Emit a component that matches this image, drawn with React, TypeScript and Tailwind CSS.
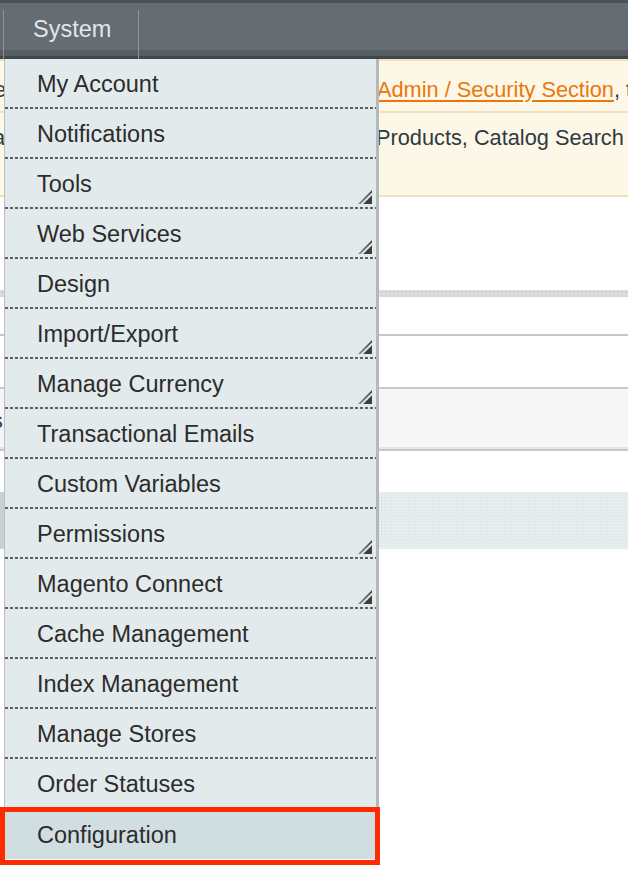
import React from "react";

type Item = { label: string; sub?: boolean; active?: boolean };

const items: Item[] = [
  { label: "My Account" },
  { label: "Notifications" },
  { label: "Tools", sub: true },
  { label: "Web Services", sub: true },
  { label: "Design" },
  { label: "Import/Export", sub: true },
  { label: "Manage Currency", sub: true },
  { label: "Transactional Emails" },
  { label: "Custom Variables" },
  { label: "Permissions", sub: true },
  { label: "Magento Connect", sub: true },
  { label: "Cache Management" },
  { label: "Index Management" },
  { label: "Manage Stores" },
  { label: "Order Statuses" },
  { label: "Configuration", active: true },
];

function SubArrow() {
  return (
    <svg
      width="14"
      height="14"
      viewBox="0 0 14 14"
      className="absolute right-[4px] bottom-[3px]"
    >
      <defs>
        <linearGradient id="ag" x1="0" y1="1" x2="1" y2="0">
          <stop offset="0" stopColor="#8a8a8a" />
          <stop offset="1" stopColor="#444" />
        </linearGradient>
      </defs>
      <polygon points="0,14 14,0 14,2.6 2.6,14" fill="url(#ag)" />
      <polygon points="5.2,14 14,5.2 14,14" fill="#3e3e3e" />
    </svg>
  );
}

export default function App() {
  return (
    <div className="relative w-[628px] h-[882px] overflow-hidden bg-white font-['Liberation_Sans',Arial,sans-serif]">
      {/* Top navigation bar */}
      <header className="flex h-[59px] flex-col border-t-[3px] border-[#4a5257]">
        <div className="flex h-[56px] bg-[linear-gradient(to_bottom,#656c72_0px,#656c72_47px,#575e63_47px,#575e63_53px,#3c464b_53px)]">
          <div className="ml-[3px] mt-[7px] flex w-[136px] items-start border-x border-[#8e9498] pl-[29px] pt-[5px] text-[23.5px] leading-[28px] text-[#e3e6e8]">
            System
          </div>
        </div>
      </header>

      {/* Page content underneath the dropdown */}
      <main className="flex flex-col">
        <div className="flex h-[138px] flex-col border-y-2 border-y-[#f1e1b8] bg-[#fdf7e7] text-[21.75px] leading-[25px] text-[#2f3a40]">
          <div className="flex h-[50px] items-center whitespace-nowrap pt-[6px]">
            <span className="ml-[-6px] w-[383px] shrink-0">e</span>
            <span className="shrink-0 text-[#eb770c] underline underline-offset-[3px]">
              Admin / Security Section
            </span>
            <span className="shrink-0">, to</span>
          </div>
          <div className="h-[2px] bg-[#efe0bb]" />
          <div className="flex whitespace-nowrap pt-[12px]">
            <span className="ml-[-7px] w-[383px] shrink-0">a</span>
            <span className="shrink-0">Products, Catalog Search Index</span>
          </div>
        </div>
        <div className="h-[93px]" />
        <div className="h-[7px] bg-[#dddddd] bg-[radial-gradient(circle,#cfcfcf_0.7px,transparent_0.9px)] bg-[length:4px_4px]" />
        <div className="h-[37px]" />
        <div className="h-[2px] bg-[#c5c7c7]" />
        <div className="h-[51px]" />
        <div className="flex h-[64px] flex-col border-y-2 border-y-[#c7c9c9] bg-[#f6f6f6]">
          <div className="flex flex-1 items-center pt-[4px] text-[21.75px] leading-[25px] text-[#2f3a40]">
            <span className="ml-[-8px]">s</span>
          </div>
          <div className="h-[2px] bg-[#e4e4e4]" />
        </div>
        <div className="h-[41px]" />
        <div className="h-[57px] border-l-[4px] border-[#c9d0d0] bg-[#e2eaeb] bg-[radial-gradient(circle,#f3f7f7_0.6px,transparent_0.8px)] bg-[length:3px_3px]" />
      </main>

      {/* Dropdown menu */}
      <nav className="absolute left-[4px] top-[59px] w-[375px] border-l border-r-[3px] border-l-[#b7bfc1] border-r-[#b3b8b9] bg-[#e2eaeb] bg-[radial-gradient(circle,#d2dbdd_0.5px,transparent_0.7px)] bg-[length:8px_8px]">
        {items.map((it) =>
          it.active ? (
            <div
              key={it.label}
              className="relative flex h-[50px] items-center bg-[#d1dee1] pl-[32px] pt-[2px] text-[23.5px] leading-[28px] text-[#2c2c2c]"
            >
              {it.label}
              <div className="pointer-events-none absolute left-[-5px] top-[-2px] h-[58px] w-[380px] border-[5px] border-[#ff2a00]" />
            </div>
          ) : (
            <div key={it.label} className="flex flex-col">
              <div className="relative flex h-[48px] items-center pl-[32px] pt-[2px] text-[23.5px] leading-[28px] text-[#2c2c2c]">
                {it.label}
                {it.sub && <SubArrow />}
              </div>
              <div className="h-[2px] bg-[linear-gradient(to_right,#5d6163_3px,transparent_3px)] bg-[length:5px_2px] bg-repeat-x" />
            </div>
          )
        )}
      </nav>
    </div>
  );
}
